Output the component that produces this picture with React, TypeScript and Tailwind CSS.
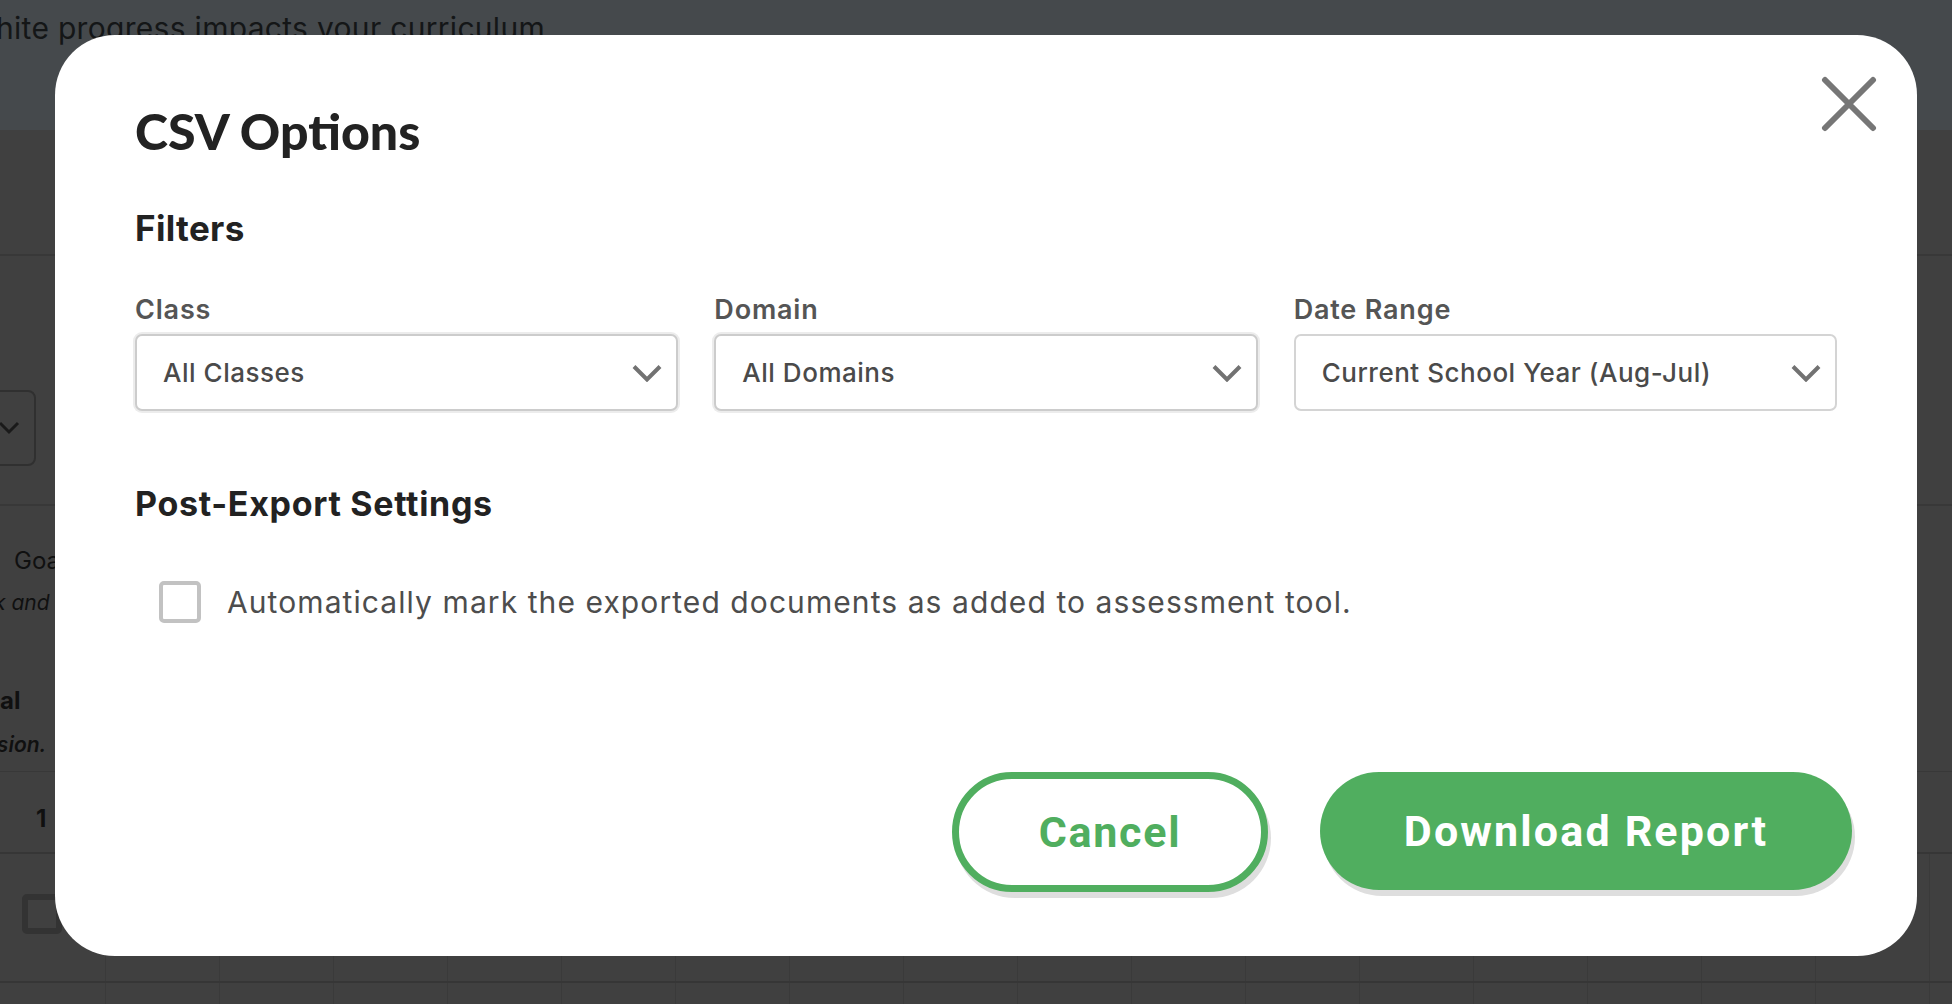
import React from "react";

const filters = [
  { label: "Class", value: "All Classes", ring: true },
  { label: "Domain", value: "All Domains", ring: true },
  { label: "Date Range", value: "Current School Year (Aug-Jul)", ring: false },
];

const gridCols = Array.from({ length: 17 });

function Chevron() {
  return (
    <svg width="30" height="18" viewBox="0 0 30 18" fill="none">
      <path d="M2 2.5L15 15.5L28 2.5" stroke="#727272" strokeWidth="4" />
    </svg>
  );
}

function CloseIcon() {
  return (
    <svg width="56" height="56" viewBox="0 0 56 56" fill="none">
      <path
        d="M4 4L52 52M52 4L4 52"
        stroke="#767676"
        strokeWidth="6"
        strokeLinecap="round"
      />
    </svg>
  );
}

export default function App() {
  return (
    <div className="relative w-[1952px] h-[1004px] overflow-hidden bg-[#404040] font-['Inter',sans-serif]">
      {/* page behind the overlay */}
      <div className="flex flex-col">
        <div className="h-[130px] bg-[#45494c] pt-[8px]">
          <p className="-ml-[4px] text-[30px] leading-[40px] tracking-[0.01em] text-[#141617]">
            hite progress impacts your curriculum
          </p>
        </div>
        <div className="h-[126px] border-b-2 border-[#383838]" />
        <div className="h-[250px] border-b-2 border-[#383838] flex items-start pt-[134px]">
          <div className="-ml-[24px] w-[60px] h-[76px] rounded-[8px] border-2 border-[#303030] flex items-center justify-end pr-[14px]">
            <svg width="22" height="14" viewBox="0 0 22 14" fill="none">
              <path d="M2 2L11 11L20 2" stroke="#1a1a1a" strokeWidth="3" />
            </svg>
          </div>
        </div>
        <div className="h-[266px] border-b border-[#383838] pl-[14px] pt-[40px] text-[#101010]">
          <p className="text-[24px] leading-[30px]">Goal</p>
          <p className="-ml-[20px] mt-[14px] text-[21px] italic leading-[26px]">k and</p>
          <p className="-ml-[14px] mt-[70px] text-[24px] font-bold leading-[30px]">al</p>
          <p className="-ml-[30px] mt-[16px] text-[21px] italic font-semibold leading-[26px]">nsion.</p>
        </div>
        <div className="h-[82px] border-b-2 border-[#363636] flex items-center pt-[14px] pl-[36px] text-[24px] font-bold text-[#101010]">
          1
        </div>
        <div className="h-[129px] border-b-2 border-[#363636] flex">
          <div className="w-[106px] shrink-0 border-r border-[#3a3a3a] pt-[40px] pl-[22px]">
            <div className="w-[40px] h-[40px] rounded-[5px] border-[6px] border-[#333333]" />
          </div>
          {gridCols.map((_, i) => (
            <div key={i} className="w-[114px] shrink-0 border-r border-[#3a3a3a]" />
          ))}
        </div>
        <div className="h-[30px] flex">
          <div className="w-[106px] shrink-0 border-r border-[#3a3a3a]" />
          {gridCols.map((_, i) => (
            <div key={i} className="w-[114px] shrink-0 border-r border-[#3a3a3a]" />
          ))}
        </div>
      </div>

      {/* modal */}
      <div className="absolute left-[55px] top-[35px] w-[1862px] h-[921px] rounded-[60px] bg-white flex flex-col">
        <button className="absolute right-[40px] top-[41px]">
          <CloseIcon />
        </button>

        <div className="px-[80px] pt-[72px]">
          <h1 className="font-['Lato',sans-serif] text-[50px] font-black leading-[48px] text-[#222222]">
            CSV Options
          </h1>

          <h2 className="mt-[56px] text-[35px] font-bold leading-[35px] tracking-[0.01em] text-[#222222]">
            Filters
          </h2>

          <div className="mt-[50px] grid grid-cols-3 gap-x-[36px]">
            {filters.map((f) => (
              <div key={f.label} className="flex flex-col">
                <span className="text-[27px] font-semibold leading-[27px] tracking-[0.03em] text-[#555555]">
                  {f.label}
                </span>
                <div
                  className={`mt-[11px] h-[77px] rounded-[7px] border-2 bg-white flex items-center justify-between pl-[26px] pr-[14px] ${
                    f.ring
                      ? "border-[#cccccc] shadow-[0_0_0_2px_#ececec]"
                      : "border-[#d4d4d4]"
                  }`}
                >
                  <span className="text-[26px] font-medium tracking-[0.02em] text-[#4a4a4a]">
                    {f.value}
                  </span>
                  <Chevron />
                </div>
              </div>
            ))}
          </div>

          <h2 className="mt-[76px] text-[34px] font-bold leading-[34px] tracking-[0.02em] text-[#222222]">
            Post-Export Settings
          </h2>

          <label className="mt-[60px] ml-[24px] flex items-center gap-[26px]">
            <span className="w-[42px] h-[42px] rounded-[5px] border-4 border-[#c2c2c2] bg-white" />
            <span className="text-[30px] leading-[30px] tracking-[0.036em] text-[#4d4d4d]">
              Automatically mark the exported documents as added to assessment tool.
            </span>
          </label>
        </div>

        <div className="mt-auto flex justify-end gap-[52px] pr-[65px] pb-[64px]">
          <button className="w-[316px] h-[120px] rounded-full border-[7px] border-[#50ae5f] bg-white shadow-[3px_6px_0_#dedede] font-['Roboto',sans-serif] text-[43px] font-bold tracking-[0.04em] text-[#50ae5f]">
            Cancel
          </button>
          <button className="w-[532px] h-[118px] rounded-full bg-[#50ae5f] shadow-[3px_6px_0_#dedede] font-['Roboto',sans-serif] text-[43px] font-bold tracking-[0.05em] text-white">
            Download Report
          </button>
        </div>
      </div>
    </div>
  );
}
